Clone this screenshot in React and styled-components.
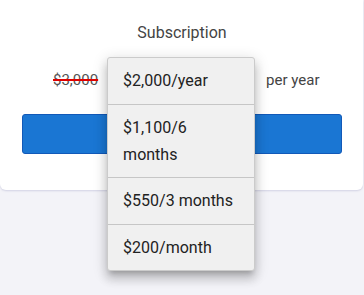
import React from "react";
import styled, { createGlobalStyle } from "styled-components";

const Global = createGlobalStyle`
  html, body { margin: 0; padding: 0; }
  body {
    background: #f3f3f8;
    font-family: Roboto, "Liberation Sans", Arial, sans-serif;
    width: 364px;
    height: 295px;
    overflow: hidden;
  }
`;

const Card = styled.section`
  width: 363px;
  box-sizing: border-box;
  background: #ffffff;
  border-radius: 0 0 6px 6px;
  box-shadow: 0 1px 2px rgba(60, 60, 140, 0.18);
  padding: 22px 21px 36px 22px;
  display: flex;
  flex-direction: column;
`;

const Title = styled.h2`
  margin: 0;
  font-size: 16px;
  font-weight: 400;
  line-height: 22px;
  color: #444;
  text-align: center;
`;

const PriceRow = styled.div`
  margin-top: 13px;
  height: 46px;
  display: flex;
  align-items: center;
  padding-left: 31px;
  font-size: 15px;
  color: #444;
`;

const OldPrice = styled.span`
  margin-right: 9px;
  text-decoration: line-through;
  text-decoration-color: #e00000;
  text-decoration-thickness: 1.5px;
  color: #555;
`;

const PerYear = styled.span`
  margin-left: 11px;
`;

const SelectSlot = styled.div`
  position: relative;
  width: 148px;
  height: 46px;
`;

const Menu = styled.ul`
  position: absolute;
  top: 0;
  left: 0;
  z-index: 10;
  width: 148px;
  box-sizing: border-box;
  margin: 0;
  padding: 0;
  list-style: none;
  background: #f0f0f0;
  border: 1px solid #cbcbcb;
  border-radius: 3px;
  box-shadow: 0 5px 5px -3px rgba(0, 0, 0, 0.2),
    0 8px 10px 1px rgba(0, 0, 0, 0.14), 0 3px 14px 2px rgba(0, 0, 0, 0.12);
`;

const MenuItem = styled.li`
  padding: 9px 15px 9.5px 15px;
  font-size: 16px;
  line-height: 27px;
  color: #222;
  border-top: ${(p) => (p.$first ? "none" : "1px solid #c6c6c6")};
`;

const Button = styled.button`
  margin-top: 11px;
  height: 40px;
  width: 320px;
  border: 1px solid #1259b8;
  border-radius: 3px;
  background: #1a76d3;
  color: #fff;
  font-family: inherit;
  font-size: 15px;
`;

const options = ["$2,000/year", "$1,100/6 months", "$550/3 months", "$200/month"];

export default function App() {
  return (
    <>
      <Global />
      <Card>
        <Title>Subscription</Title>
        <PriceRow>
          <OldPrice>$3,000</OldPrice>
          <SelectSlot>
            <Menu>
              {options.map((o, i) => (
                <MenuItem key={o} $first={i === 0}>
                  {o}
                </MenuItem>
              ))}
            </Menu>
          </SelectSlot>
          <PerYear>per year</PerYear>
        </PriceRow>
        <Button aria-label="Subscribe" />
      </Card>
    </>
  );
}
